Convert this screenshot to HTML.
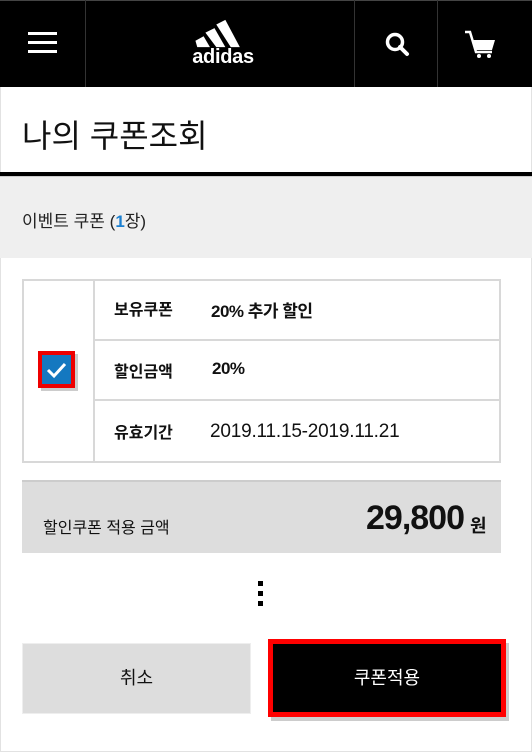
<!DOCTYPE html>
<html><head><meta charset="utf-8"><style>
*{margin:0;padding:0;box-sizing:border-box}
body{width:532px;height:752px;overflow:hidden;background:#fff;font-family:"Liberation Sans","Noto Sans CJK KR",sans-serif;position:relative;color:#111}
.a{position:absolute}
.frame{left:0;top:0;width:532px;height:752px;border:1px solid #e2e2e2}
</style></head><body>
<div class="a frame"></div>
<div class="a" style="left:0;top:0;width:532px;height:87px;background:#000;border-top:1px solid #444"></div>
<div class="a" style="left:85px;top:0;width:1px;height:87px;background:#333"></div>
<div class="a" style="left:354px;top:0;width:1px;height:87px;background:#333"></div>
<div class="a" style="left:437px;top:0;width:1px;height:87px;background:#333"></div>
<!-- menu -->
<div class="a" style="left:28px;top:32px;width:29px;height:3px;background:#fff"></div>
<div class="a" style="left:28px;top:41px;width:29px;height:3px;background:#fff"></div>
<div class="a" style="left:28px;top:50px;width:29px;height:3px;background:#fff"></div>
<!-- logo -->
<svg class="a" style="left:193px;top:19px" width="52" height="29" viewBox="0 0 54 32">
<polygon points="1,24 10,19 17,31 3,31" fill="#fff"/>
<polygon points="12,15 22,10 34,31 24,31" fill="#fff"/>
<polygon points="24,6 34,1 50,31 40,31" fill="#fff"/>
</svg>
<div class="a" style="left:185px;top:46px;width:76px;text-align:center;color:#fff;font-weight:bold;font-size:20px;letter-spacing:-0.3px">adidas</div>
<!-- search -->
<svg class="a" style="left:383px;top:30px" width="28" height="28" viewBox="0 0 28 28"><circle cx="12" cy="12" r="7.5" stroke="#fff" stroke-width="3.5" fill="none"/><line x1="17" y1="17" x2="24" y2="24" stroke="#fff" stroke-width="4" stroke-linecap="round"/></svg>
<!-- cart -->
<svg class="a" style="left:464px;top:30px" width="34" height="34" viewBox="0 0 34 34"><path d="M1 2 H6 L12 22 H28" stroke="#fff" stroke-width="2.5" fill="none"/><polygon points="8,10 31,10 28,20 11,20" fill="#fff"/><circle cx="15" cy="26" r="2" fill="#fff"/><circle cx="25" cy="26" r="2" fill="#fff"/></svg>
<!-- title -->
<div class="a" style="left:22px;top:111px;font-size:32px;color:#111">나의 쿠폰조회</div>
<div class="a" style="left:0;top:172px;width:532px;height:4px;background:#000"></div>
<div class="a" style="left:0;top:176px;width:532px;height:82px;background:#efefef;border-top:1px solid #ccc"></div>
<div class="a" style="left:22px;top:207px;font-size:17px;color:#222">이벤트 쿠폰 (<span style="color:#1a7fd0;font-weight:bold">1</span>장)</div>
<!-- table -->
<div class="a" style="left:22px;top:279px;width:479px;height:184px;border:2px solid #d8d8d8"></div>
<div class="a" style="left:93px;top:279px;width:2px;height:184px;background:#d8d8d8"></div>
<div class="a" style="left:93px;top:339px;width:408px;height:2px;background:#d8d8d8"></div>
<div class="a" style="left:93px;top:399px;width:408px;height:2px;background:#d8d8d8"></div>
<div class="a" style="left:41px;top:354px;width:37px;height:37px;background:#ccc"></div>
<div class="a" style="left:38px;top:351px;width:37px;height:37px;background:#e00;padding:4px"><div style="width:29px;height:29px;background:#1478c0"></div></div>
<svg class="a" style="left:45px;top:359px" width="24" height="22" viewBox="0 0 24 22"><path d="M3 11 L9 17 L20 5" stroke="#fff" stroke-width="3" fill="none"/></svg>
<div class="a" style="left:114px;top:296px;font-size:16px;font-weight:bold">보유쿠폰</div>
<div class="a" style="left:211px;top:297px;font-size:17px;font-weight:bold;letter-spacing:-0.5px">20% 추가 할인</div>
<div class="a" style="left:114px;top:358px;font-size:16px;font-weight:bold">할인금액</div>
<div class="a" style="left:212px;top:359px;font-size:17px;font-weight:bold;letter-spacing:-0.5px">20%</div>
<div class="a" style="left:114px;top:419px;font-size:16px;font-weight:bold">유효기간</div>
<div class="a" style="left:210px;top:421px;font-size:19px;letter-spacing:-0.2px">2019.11.15-2019.11.21</div>
<!-- summary -->
<div class="a" style="left:22px;top:480px;width:479px;height:73px;background:#ddd;border-top:2px solid #ccc"></div>
<div class="a" style="left:43px;top:514px;font-size:16px">할인쿠폰 적용 금액</div>
<div class="a" style="left:300px;top:499px;width:164px;text-align:right;font-size:34px;font-weight:bold;letter-spacing:-1px">29,800</div>
<div class="a" style="left:470px;top:512px;font-size:18px;font-weight:bold">원</div>
<!-- dots -->
<div class="a" style="left:258px;top:581px;width:5px;height:5px;background:#000"></div>
<div class="a" style="left:258px;top:591px;width:5px;height:5px;background:#000"></div>
<div class="a" style="left:258px;top:601px;width:5px;height:5px;background:#000"></div>
<!-- buttons -->
<div class="a" style="left:22px;top:643px;width:229px;height:71px;background:#ddd;border:1px solid #eee;text-align:center;line-height:69px;font-size:18px">취소</div>
<div class="a" style="left:271px;top:643px;width:238px;height:78px;background:#ccc"></div>
<div class="a" style="left:268px;top:639px;width:238px;height:78px;background:#000;border:5px solid #f00;color:#fff;text-align:center;line-height:68px;font-size:18px">쿠폰적용</div>
</body></html>
